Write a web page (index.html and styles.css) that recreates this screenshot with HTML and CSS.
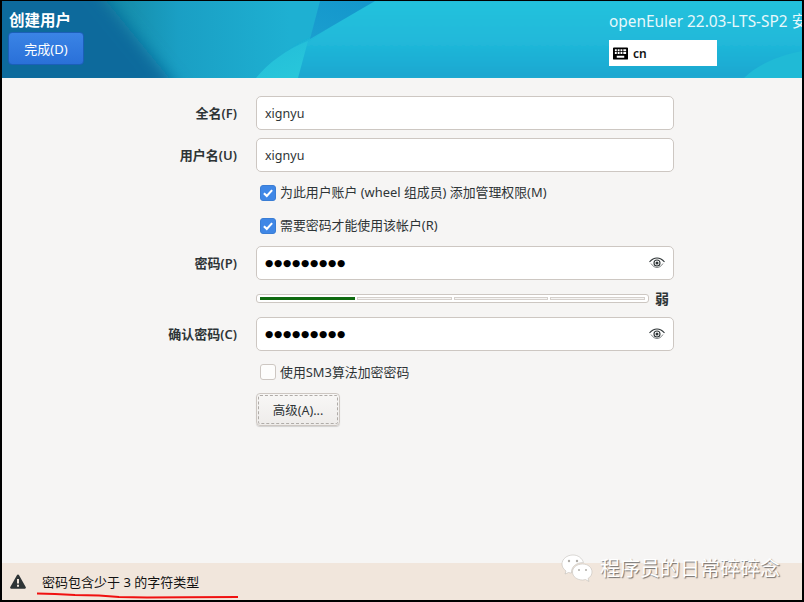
FILE: index.html
```html
<!DOCTYPE html>
<html lang="zh">
<head>
<meta charset="utf-8">
<title>创建用户</title>
<link rel="stylesheet" href="styles.css">
</head>
<body>
<div class="window">
  <header class="header">
    <svg class="header-art" viewBox="0 0 800 77" preserveAspectRatio="none" aria-hidden="true">
      <defs>
        <linearGradient id="base" x1="0" y1="0" x2="1" y2="0">
          <stop offset="0" stop-color="#0c6c9e"/>
          <stop offset="0.12" stop-color="#13859f"/>
          <stop offset="0.22" stop-color="#1a9fc4"/>
          <stop offset="0.36" stop-color="#1eb0d2"/>
          <stop offset="1" stop-color="#1eb0d4"/>
        </linearGradient>
        <linearGradient id="upper" x1="0" y1="0" x2="0" y2="1">
          <stop offset="0" stop-color="#24c2dd"/>
          <stop offset="0.55" stop-color="#20b8d9"/>
          <stop offset="1" stop-color="#1ba6d0"/>
        </linearGradient>
        <linearGradient id="wedge" x1="0" y1="0" x2="0.6" y2="1">
          <stop offset="0" stop-color="#22bcd9"/>
          <stop offset="1" stop-color="#28c6da"/>
        </linearGradient>
        <linearGradient id="topwedge" x1="0.7" y1="0" x2="0.2" y2="1">
          <stop offset="0" stop-color="#1497cc"/>
          <stop offset="1" stop-color="#1a9ecf"/>
        </linearGradient>
        <filter id="soft" x="-30%" y="-30%" width="160%" height="160%"><feGaussianBlur stdDeviation="8"/></filter>
        <filter id="softer" x="-10%" y="-10%" width="120%" height="120%"><feGaussianBlur stdDeviation="1"/></filter>
      </defs>
      <rect width="800" height="77" fill="url(#base)"/>
      <polygon points="-30,-20 88,-20 178,90 -30,90" fill="#0a6a9c" filter="url(#soft)"/>
      <path d="M360,0 H800 V77 H262 C276,58 290,46 308,38 C326,26 345,12 372,0 Z" fill="url(#upper)" filter="url(#softer)"/>
      <polygon points="318,0 373,0 308,38" fill="url(#topwedge)"/>
      <path d="M306,40 C285,48 266,62 254,77 H296 Z" fill="url(#wedge)"/>
      <path d="M800,50 C775,55 755,64 742,77 H800 Z" fill="#20bad6"/>
    </svg>
    <div class="header-left">
      <h1 class="title">创建用户</h1>
      <button class="done" type="button">完成(D)</button>
    </div>
    <div class="header-right">
      <div class="product">openEuler 22.03-LTS-SP2 安装</div>
      <div class="layout-box">
        <svg class="kbd" viewBox="0 0 16 13" aria-hidden="true">
          <path fill-rule="evenodd" d="M1 0H15A1 1 0 0 1 16 1V12A1 1 0 0 1 15 13H1A1 1 0 0 1 0 12V1A1 1 0 0 1 1 0ZM2 2V4H4V2ZM5 2V4H7V2ZM8 2V4H10V2ZM11 2V4H14V2ZM2 5V7H4V5ZM5 5V7H7V5ZM8 5V7H10V5ZM11 5V7H14V5ZM4 9V11H12V9Z"/>
        </svg>
        <span>cn</span>
      </div>
    </div>
  </header>

  <main class="content">
    <form class="form">
      <label class="label gap">全名(F)</label>
      <div class="entry gap">xignyu</div>

      <label class="label">用户名(U)</label>
      <div class="entry">xignyu</div>

      <div class="check row-check-a"><span class="box on"><svg viewBox="0 0 16 16"><path d="M3.300 8.200L6.600 11.300L12.700 4.700" /></svg></span>为此用户账户 (wheel 组成员) 添加管理权限(M)</div>
      <div class="check row-check-b"><span class="box on"><svg viewBox="0 0 16 16"><path d="M3.300 8.200L6.600 11.300L12.700 4.700" /></svg></span>需要密码才能使用该帐户(R)</div>

      <label class="label">密码(P)</label>
      <div class="entry">
        <span class="dots">●●●●●●●●●</span>
        <svg class="eye" viewBox="0 0 16 12"><path d="M0.500 5C3 2 5.500 1 8 1S13 2 15.500 5" /><path d="M2 6.500C4 9.500 6 10.500 8 10.500S12 9.500 14 6.500" class="thin"/><circle cx="8" cy="6" r="3" /><circle cx="8" cy="6" r="1.500" class="fill"/></svg>
      </div>

      <div class="strength">
        <div class="meter"><i class="seg filled"></i><i class="seg"></i><i class="seg"></i><i class="seg"></i></div>
        <span class="weak">弱</span>
      </div>

      <label class="label">确认密码(C)</label>
      <div class="entry">
        <span class="dots">●●●●●●●●●</span>
        <svg class="eye" viewBox="0 0 16 12"><path d="M0.500 5C3 2 5.500 1 8 1S13 2 15.500 5" /><path d="M2 6.500C4 9.500 6 10.500 8 10.500S12 9.500 14 6.500" class="thin"/><circle cx="8" cy="6" r="3" /><circle cx="8" cy="6" r="1.500" class="fill"/></svg>
      </div>

      <div class="check row-check-c"><span class="box"></span>使用SM3算法加密密码</div>
      <div class="adv-row"><button class="advanced" type="button">高级(A)...</button></div>
    </form>
  </main>

  <footer class="status">
    <svg class="warn" viewBox="0 0 16 15"><path fill-rule="evenodd" d="M8 0.500C8.500 0.500 8.900 0.800 9.100 1.200L15.700 12.900C16.200 13.800 15.600 14.800 14.600 14.800H1.400C0.400 14.800 -0.200 13.800 0.300 12.900L6.900 1.200C7.100 0.800 7.500 0.500 8 0.500ZM7 5V9.500H9V5ZM7 10.700V12.700H9V10.700Z"/></svg>
    <span class="status-text">密码包含少于 3 的字符类型</span>
  </footer>

  <svg class="scribble" viewBox="0 0 203 10" aria-hidden="true"><path d="M0 2.500L18 3L38 4L62 4.500L82 6L110 6.500L150 6.200L201 6"/></svg>

  <div class="watermark">
    <svg class="wechat" viewBox="0 0 32 28" aria-hidden="true">
      <path d="M12 1C6 1 1 5 1 10C1 13 2.500 15 5 17L4 20L7.500 18.500C8.500 18.800 9.500 19 10.500 19C10 13 15 8.500 22.500 8.500C21 4 17 1 12 1Z"/>
      <path d="M21.500 10C16 10 11.500 13.500 11.500 18C11.500 22.500 16 26 21.500 26C22.500 26 23.500 25.800 24.500 25.500L28 27.500L27 24.500C29.500 23 31 20.700 31 18C31 13.500 27 10 21.500 10Z"/>
      <circle cx="8" cy="7" r="1.200" class="eye-dot"/><circle cx="16" cy="7" r="1.200" class="eye-dot"/>
      <circle cx="18" cy="16" r="1" class="eye-dot"/><circle cx="25" cy="16" r="1" class="eye-dot"/>
    </svg>
    <span>程序员的日常碎碎念</span>
  </div>
</div>
</body>
</html>
```

FILE: styles.css
```css
* { box-sizing: border-box; }
html, body { margin: 0; padding: 0; width: 804px; height: 602px; overflow: hidden; background: #000; }
body { font-family: "Noto Sans", "Noto Sans CJK SC", sans-serif; font-size: 13px; color: #2e3436; }

.window {
  position: relative;
  width: 800px;
  height: 599px;
  margin: 1px 2px 2px;
  display: flex;
  flex-direction: column;
  background: #f6f5f4;
  overflow: hidden;
}

.header {
  position: relative;
  height: 77px;
  flex: none;
  display: flex;
  justify-content: space-between;
  overflow: hidden;
}
.header-art { position: absolute; inset: 0; width: 100%; height: 100%; }
.header-left { position: relative; display: flex; flex-direction: column; padding: 8px 0 0 6px; align-items: flex-start; }
.title { margin: 0 0 0 1px; font-size: 15.500px; line-height: 21px; font-weight: 700; color: #fff; font-family: "Noto Sans CJK SC", sans-serif; }
.done {
  margin-top: 2px;
  width: 76px;
  height: 33px;
  border: 1px solid #1b5fb8;
  border-radius: 4px;
  background: linear-gradient(#3a84e6, #2a70d8);
  color: #fff;
  font: 13px "Noto Sans", "Noto Sans CJK SC", sans-serif;
  padding: 0;
}
.header-right { position: relative; width: 193px; padding-top: 10px; flex: none; white-space: nowrap; overflow: hidden; }
.product { font-size: 15.400px; line-height: 21px; color: #e8f8fb; }
.layout-box {
  margin-top: 8px;
  width: 108px;
  height: 26px;
  background: #fff;
  display: flex;
  align-items: center;
  gap: 5px;
  padding-left: 4px;
  color: #111;
  font-size: 12px;
  font-weight: 600;
}
.kbd { width: 15px; height: 13px; fill: #000; }

.content { flex: 1; padding-top: 18px; }
.form {
  display: grid;
  grid-template-columns: 235px 418px;
  column-gap: 19px;
  grid-auto-rows: min-content;
  align-items: center;
}
.label { text-align: right; font-weight: 600; font-size: 13px; line-height: 18px; padding-bottom: 1px; color: #2e3436; }
.label.gap { margin-bottom: 8px; }
.entry {
  grid-column: 2;
  height: 34px;
  padding: 0 8px;
  display: flex;
  align-items: center;
  justify-content: space-between;
  font-size: 12.500px;
  background: #fff;
  border: 1px solid #cdc7c2;
  border-radius: 5px;
  color: #2e3436;
}
.entry.gap { margin-bottom: 8px; }
.dots { font-size: 9.500px; letter-spacing: 0.700px; color: #000; line-height: 1; font-family: "DejaVu Sans", sans-serif; }
.eye { width: 16px; height: 12px; fill: none; stroke: #2e3436; stroke-width: 1.100; }
.eye .thin { stroke-width: 0.600; }
.eye .fill { fill: #2e3436; stroke: none; }

.check { grid-column: 2; display: flex; align-items: center; gap: 4px; padding-left: 4px; font-size: 12.900px; line-height: 17px; color: #2e3436; }
.row-check-a { margin-top: 4px; height: 33px; }
.row-check-b { height: 33px; margin-bottom: 4px; }
.row-check-c { margin-top: 4px; height: 34px; }
.box {
  width: 16px;
  height: 16px;
  flex: none;
  border: 1px solid #cdc7c2;
  border-radius: 3px;
  background: #fdfdfc;
  display: flex;
}
.box.on { background: #3f87e6; border-color: #3a7dd4; }
.box svg { width: 100%; height: 100%; fill: none; stroke: #fff; stroke-width: 2.400; }

.strength { grid-column: 2; display: flex; align-items: center; gap: 6px; margin: 14px 0; height: 9px; width: 436px; }
.meter {
  width: 393px;
  height: 9px;
  flex: none;
  display: flex;
  gap: 2px;
  padding: 2px 3px;
  background: #fff;
  border: 1px solid #cdc7c2;
  border-radius: 3px;
}
.seg { flex: 1; background: #f6f5f4; box-shadow: inset 0 0 0 1px #d5d0cc; }
.seg.filled { background: #0f6a10; box-shadow: none; }
.weak { font-size: 14px; font-weight: 700; color: #2e3436; line-height: 9px; }

.adv-row { grid-column: 2; margin-top: 4px; }
.advanced {
  width: 84px;
  height: 33px;
  padding: 0;
  border: 1px solid #cdc7c2;
  border-radius: 4px;
  background: linear-gradient(#f8f7f6, #eeecea);
  outline: 1px dashed #b0aca8;
  outline-offset: -3px;
  box-shadow: 0 1px 1px rgba(0,0,0,.15);
  color: #2e3436;
  font: 12.500px "Noto Sans", "Noto Sans CJK SC", sans-serif;
}

.status {
  flex: none;
  height: 37px;
  background: #f1e6dc;
  display: flex;
  align-items: center;
  padding-left: 8px;
  gap: 16px;
  color: #111;
}
.warn { width: 16px; height: 15px; fill: #2e3436; flex: none; }
.status-text { font-size: 13px; }

.scribble {
  position: absolute;
  left: 35px;
  top: 590px;
  width: 203px;
  height: 10px;
  fill: none;
  stroke: #f01010;
  stroke-width: 2;
  overflow: visible;
}

.watermark {
  position: absolute;
  left: 559px;
  top: 552px;
  display: flex;
  align-items: center;
  gap: 7px;
  color: #fff;
  font-family: "Noto Sans CJK SC", sans-serif;
  font-size: 20px;
  text-shadow: 1px 1px 1px rgba(70,70,70,.75);
}
.wechat { width: 32px; height: 28px; fill: #fff; stroke: #b9b4ae; stroke-width: .5; }
.wechat .eye-dot { fill: #b0aca6; stroke: none; }
```
